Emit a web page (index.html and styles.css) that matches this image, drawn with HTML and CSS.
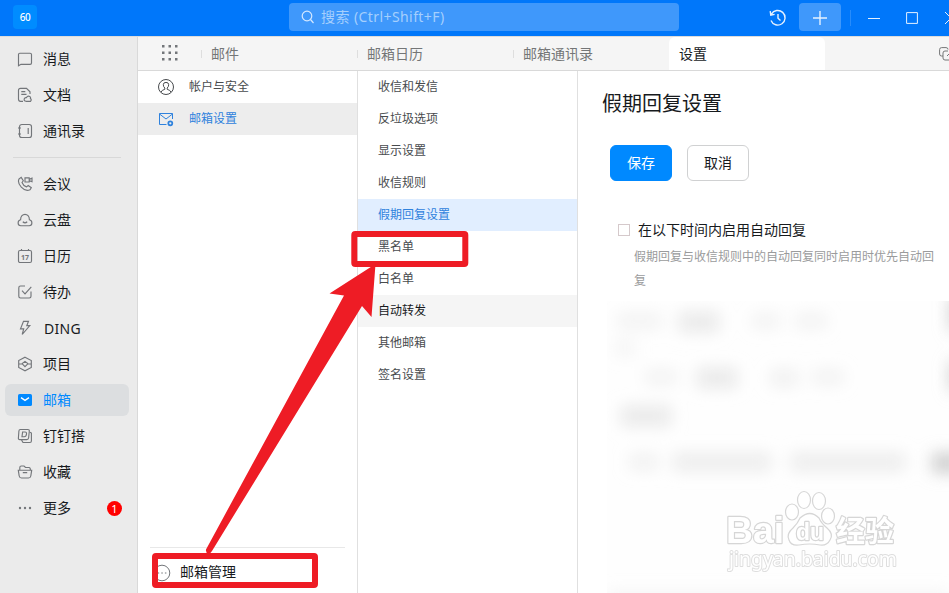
FILE: index.html
```html
<!DOCTYPE html>
<html lang="zh-CN">
<head>
<meta charset="utf-8">
<title>假期回复设置</title>
<link rel="stylesheet" href="styles.css">
</head>
<body>

<div class="topbar">
  <div class="avatar">60</div>
  <div class="search">
    <svg width="14" height="14" viewBox="0 0 14 14"><circle cx="6" cy="6" r="4.8"/><path d="M9.5 9.5L12.5 13"/></svg>
    <span>搜索 (Ctrl+Shift+F)</span>
  </div>
  <div class="tools">
    <svg class="history" width="18" height="18" viewBox="0 0 18 18"><path d="M2.4 5.2A7.3 7.3 0 1 1 2 11.5M1.2 2.2L1.8 6.1L5.6 5.4M9 5V9.3L11.5 11.5"/></svg>
    <div class="plus"><svg width="14" height="14" viewBox="0 0 14 14"><path d="M7 0V14M0 7H14"/></svg></div>
    <i class="split"></i>
    <svg class="min" width="12" height="12" viewBox="0 0 12 12"><path d="M0 6.5H12"/></svg>
    <svg class="max" width="12" height="12" viewBox="0 0 12 12"><path d="M.6 .6H11.4V11.4H.6Z"/></svg>
    <svg class="close" width="12" height="12" viewBox="0 0 12 12"><path d="M0 0L12 12M12 0L0 12"/></svg>
  </div>
</div>

<div class="app">
  <div class="sidebar">
    <div class="item"><svg width="16" height="16" viewBox="0 0 16 16"><path d="M2.8 2.2H13.1Q14.5 2.2 14.5 3.6V11.9Q14.5 13.3 13.1 13.3H4L1.5 14.8V3.6Q1.5 2.2 2.8 2.2Z"/></svg><span>消息</span></div>
    <div class="item"><svg width="16" height="16" viewBox="0 0 16 16"><path d="M6 14.3H3.5Q1.5 14.3 1.5 12.3V3.3Q1.5 1.3 3.5 1.3H9.5L13 4.8V7M4.3 4.6H8.3M4.3 7.4H9.5M9 14.3Q6.8 14 7.2 12Q7.8 10.3 9.4 10.7Q10.5 8.4 12.8 9.5Q14 10.2 13.4 11.5Q15 12.8 13.5 14.3Z"/></svg><span>文档</span></div>
    <div class="item"><svg width="16" height="16" viewBox="0 0 16 16"><rect x="2.5" y="1.5" width="12" height="13" rx="2.3"/><path d="M11.2 5V11M1 5H4M1 11H4"/></svg><span>通讯录</span></div>
    <div class="line"></div>
    <div class="item"><svg width="16" height="16" viewBox="0 0 16 16"><path d="M2 3L4.2 1.4L6.3 4.8L5 6.5Q6.3 9.8 9.5 10.9L11.2 9.5L14.3 11.7L13 13.7Q8.8 16 4.3 11.2Q.2 6.3 2 3ZM8 1.8H12.2V6H8ZM12.2 3.4L15 2.2V5.7L12.2 4.6"/></svg><span>会议</span></div>
    <div class="item"><svg width="16" height="16" viewBox="0 0 16 16"><path d="M3.8 13.7C.2 13.7 .3 8.5 3.6 7.8C3.5 .5 12.5 .5 12.4 7.8C15.7 8.5 15.8 13.7 12.2 13.7ZM5.8 9.8Q8 11.8 10.2 9.8"/></svg><span>云盘</span></div>
    <div class="item"><svg width="16" height="16" viewBox="0 0 16 16"><rect x="1.5" y="2.5" width="13" height="12" rx="1.5"/><path d="M4.5 1V3M11.5 1V3"/><text x="8" y="11.5">17</text></svg><span>日历</span></div>
    <div class="item"><svg width="16" height="16" viewBox="0 0 16 16"><path d="M8 2H3.5Q1.8 2 1.8 3.7V12.3Q1.8 14 3.5 14H12.3Q14 14 14 12.3V7.5M5 6.7L8 9.8L14.3 2.8"/></svg><span>待办</span></div>
    <div class="item"><svg width="16" height="16" viewBox="0 0 16 16"><path d="M6.5 1.3H11.5L9.8 5.6H12.8L5.2 14.5L6.7 8.8H3.5Z"/></svg><span class="ding">DING</span></div>
    <div class="item"><svg width="16" height="16" viewBox="0 0 16 16"><path d="M8 1.2L14.3 4.5V11.5L8 14.8L1.7 11.5V4.5ZM1.7 8L5 7.7L8 5.4L11 7.7L14.3 8M5 7.7L8 10.6L11 7.7"/></svg><span>项目</span></div>
    <div class="item active"><svg width="16" height="16" viewBox="0 0 16 16"><rect class="fill" x="1" y="2" width="14" height="12" rx="1.6"/><path class="flap" d="M4 5.6L8 8.4L12 5.6"/></svg><span>邮箱</span></div>
    <div class="item"><svg width="16" height="16" viewBox="0 0 16 16"><path d="M3.4 1.5H10.8Q12.5 1.5 12.3 3.2L11.6 10Q11.4 11.6 9.8 11.6H2.8Q1.2 11.6 1.4 10L1.9 3Q2 1.5 3.4 1.5ZM13 4.2L14.4 5V13Q14.4 14.5 12.9 14.5H6L4.5 12M5.6 4H8Q9.8 4 9.5 6Q9.2 8.7 7.2 8.7H5Z"/></svg><span>钉钉搭</span></div>
    <div class="item"><svg width="16" height="16" viewBox="0 0 16 16"><path d="M1.3 6.2H14.7L13.8 12Q13.5 14 11.5 14H4.5Q2.5 14 2.2 12ZM2.8 6V3.5Q2.8 2 4.3 2H7L8.5 3.5H12Q13.4 3.5 13.4 6M5.8 8.6H10.2"/></svg><span>收藏</span></div>
    <div class="item"><svg class="dots" width="16" height="16" viewBox="0 0 16 16"><circle cx="3" cy="8" r="1.2"/><circle cx="8" cy="8" r="1.2"/><circle cx="13" cy="8" r="1.2"/></svg><span>更多</span><b class="badge">1</b></div>
  </div>

  <div class="main">
    <div class="tabs">
      <svg class="grid" width="16" height="16" viewBox="0 0 16 16">
        <path d="M0 0h2.5v2.5H0zM6.500 0H9v2.500H6.500zM13 0h2.500v2.500H13zM0 6.500h2.500V9H0zM6.500 6.500H9V9H6.500zM13 6.500h2.500V9H13zM0 13h2.500v2.500H0zM6.500 13H9v2.500H6.500zM13 13h2.500v2.500H13z"/>
      </svg>
      <div class="tab">邮件</div>
      <div class="tab">邮箱日历</div>
      <div class="tab">邮箱通讯录</div>
      <div class="tab current">设置</div>
      <svg class="popout" width="14" height="14" viewBox="0 0 14 14"><path d="M4 9H2.500Q.6 9 .6 7V2.600Q.6 .6 2.600 .6H7Q9 .6 9 2.500M13 7V11Q13 13 11 13H6Q4 13 4 11V6Q4 4 6 4H9M8 9L13 4"/></svg>
    </div>

    <div class="columns">
      <div class="col nav">
        <div class="row"><svg width="16" height="16" viewBox="0 0 16 16"><circle cx="8" cy="8" r="7.5"/><path d="M3 13.2Q3.8 11 6.8 10.3V9Q5.3 7.8 5.3 5.7Q5.3 3.4 8 3.4T10.7 5.7Q10.7 7.8 9.2 9V10.3Q12.2 11 13 13.2"/></svg><span>帐户与安全</span></div>
        <div class="row selected"><svg width="16" height="16" viewBox="0 0 16 16"><path d="M8.5 13.5H1.5V2.5H14.5V8M1.5 3L8 8L14.5 3"/><circle cx="12.3" cy="12.3" r="2" stroke-width="1.7"/></svg><span>邮箱设置</span></div>
        <div class="manage"><svg width="18" height="18" viewBox="0 0 18 18"><circle cx="9" cy="9" r="7.8"/><path d="M4.7 9H6.2M8.3 9H9.8M11.9 9H13.4"/></svg><span>邮箱管理</span></div>
      </div>

      <div class="col list">
        <div class="row"><span>收信和发信</span></div>
        <div class="row"><span>反垃圾选项</span></div>
        <div class="row"><span>显示设置</span></div>
        <div class="row"><span>收信规则</span></div>
        <div class="row selected"><span>假期回复设置</span></div>
        <div class="row"><span>黑名单</span></div>
        <div class="row"><span>白名单</span></div>
        <div class="row hover"><span>自动转发</span></div>
        <div class="row"><span>其他邮箱</span></div>
        <div class="row"><span>签名设置</span></div>
      </div>

      <div class="content">
        <h1>假期回复设置</h1>
        <div class="buttons">
          <button class="save">保存</button>
          <button class="cancel">取消</button>
        </div>
        <label class="check"><i></i><span>在以下时间内启用自动回复</span></label>
        <p>假期回复与收信规则中的自动回复同时启用时优先自动回复</p>
        <!-- the form below the hint is blurred out -->
        <div class="blurred">
          <svg width="342" height="292" viewBox="0 0 342 292">
            <defs><filter id="soft" x="-10%" y="-10%" width="120%" height="120%"><feGaussianBlur stdDeviation="8"/></filter></defs>
            <g filter="url(#soft)">
              <rect x="10" y="12" width="45" height="16" opacity=".5"/>
              <rect x="72" y="11" width="40" height="20"/>
              <rect x="145" y="12" width="28" height="16" opacity=".5"/>
              <rect x="188" y="12" width="32" height="16" opacity=".5"/>
              <rect x="8" y="38" width="20" height="18" opacity=".4"/>
              <rect x="38" y="68" width="32" height="16" opacity=".5"/>
              <rect x="90" y="67" width="40" height="20"/>
              <rect x="163" y="68" width="28" height="18" opacity=".6"/>
              <rect x="205" y="68" width="32" height="16" opacity=".5"/>
              <rect x="14" y="105" width="50" height="20"/>
              <rect x="22" y="153" width="30" height="16" opacity=".6"/>
              <rect x="66" y="152" width="98" height="18" opacity=".8"/>
              <rect x="184" y="152" width="114" height="18" opacity=".8"/>
              <g class="edge">
                <rect x="325" y="152" width="30" height="20"/>
                <rect x="343" y="-5" width="12" height="35"/>
                <rect x="343" y="60" width="12" height="30"/>
              </g>
              <rect x="0" y="290" width="342" height="20" opacity=".4"/>
            </g>
          </svg>
        </div>
      </div>
    </div>
  </div>
</div>

<!-- watermark -->
<svg class="watermark" width="200" height="100" viewBox="0 0 200 100">
  <text class="brand" x="6" y="63" textLength="58" lengthAdjust="spacingAndGlyphs">Bai</text>
  <ellipse cx="72" cy="32" rx="6.5" ry="8"/>
  <ellipse cx="84" cy="20" rx="6.5" ry="8.5"/>
  <ellipse cx="99" cy="21" rx="6.5" ry="8.5"/>
  <ellipse cx="108" cy="36" rx="6.5" ry="8"/>
  <path d="M80 38Q90 29 99 38Q101 43 107 48Q114 54 110 60Q107 66 100 65Q90 63 79 65Q71 66 69 60Q66 54 73 48Q78 43 80 38Z"/>
  <text class="du" x="76" y="60" textLength="28">du</text>
  <text class="cn" x="116" y="62" textLength="58">经验</text>
  <text class="url" x="9" y="86" textLength="168" lengthAdjust="spacingAndGlyphs">jingyan.baidu.com</text>
</svg>

<!-- red marks over the page -->
<svg class="marks" width="949" height="593" viewBox="0 0 949 593">
  <rect x="354.3" y="234" width="111" height="30" rx="1"/>
  <rect x="155" y="556" width="160" height="29" rx="1"/>
  <path d="M206 549.500Q205.500 553 208.500 553.500Q210.500 553.500 212 551L362 306L371.500 317L375.500 264L329.500 293.500L344 295.500Z"/>
</svg>

</body>
</html>
```
FILE: styles.css
```css
* {
  box-sizing: border-box;
}
body {
  margin: 0;
  width: 949px;
  height: 593px;
  overflow: hidden;
  font-family: "Noto Sans", "Noto Sans CJK SC", sans-serif;
  font-size: 14px;
  color: #171a1d;
  background: #fff;
}
svg {
  flex: none;
  fill: none;
  stroke: currentColor;
}

/* blue bar on top */
.topbar {
  display: flex;
  height: 36px;
  background: #0077fa;
  color: #e5f1ff;
}
.avatar {
  flex: none;
  width: 24px;
  height: 24px;
  margin: 5px 0 0 13px;
  border-radius: 4px;
  background: #008cff;
  color: #fff;
  font-size: 10px;
  font-weight: 500;
  letter-spacing: -.5px;
  line-height: 24px;
  text-align: center;
}
.search {
  display: flex;
  align-items: center;
  gap: 6px;
  flex: none;
  width: 390px;
  height: 28px;
  margin: 3px 0 0 252px;
  padding-left: 12px;
  border-radius: 4px;
  background: #3f98fb;
  color: #a5cffd;
}
.search svg {
  color: #d4e8ff;
  stroke-width: 1.2;
}
.search span {
  padding-bottom: 2px;
  letter-spacing: .42px;
}
.tools {
  display: flex;
  align-items: center;
  flex: none;
  margin-left: 90px;
}
.history {
  stroke-width: 1.4;
}
.plus {
  display: flex;
  align-items: center;
  justify-content: center;
  width: 42px;
  height: 28px;
  margin: -2px 0 0 12px;
  border-radius: 4px;
  background: #3f98fb;
}
.plus svg {
  margin-top: 2px;
  stroke-width: 1.4;
}
.split {
  width: 1px;
  height: 16px;
  margin-left: 9px;
  background: #278cfb;
}
.min {
  margin-left: 17px;
}
.max {
  margin-left: 26px;
}
.close {
  margin-left: 27px;
}

.app {
  display: flex;
  height: 557px;
}

/* left menu */
.sidebar {
  flex: none;
  width: 138px;
  padding: 6px 0 0 5px;
  border-right: 1px solid #d9d9d9;
  border-top: 1px solid #dcdcdc;
  background: #ebebeb;
}
.item {
  display: flex;
  align-items: center;
  width: 124px;
  height: 32px;
  margin-bottom: 4px;
  padding-left: 12px;
  border-radius: 6px;
}
.item span,
.row span {
  padding-bottom: 2px;
}
.item .ding {
  padding: 0 0 0 1px;
  letter-spacing: .3px;
}
.item svg {
  margin-right: 10px;
  color: #73767a;
  stroke-width: 1.15;
}
.item text {
  fill: #73767a;
  stroke: none;
  font-size: 7px;
  font-weight: bold;
  text-anchor: middle;
}
.item.active {
  background: #dcdee0;
  color: #0089ff;
}
.item .fill {
  fill: #0089ff;
  stroke: none;
}
.item .flap {
  stroke: #fff;
  stroke-width: 1.3;
}
.item .dots,
.grid {
  fill: #73767a;
  stroke: none;
}
.line {
  width: 108px;
  height: 1px;
  margin: 10px 0 10px 8px;
  background: #d8d8d8;
}
.badge {
  width: 15px;
  height: 15px;
  margin: 0 7px 0 auto;
  border-radius: 50%;
  background: #ff0000;
  color: #fff;
  font-size: 11px;
  font-weight: normal;
  line-height: 15px;
  text-align: center;
}

/* tabs */
.main {
  flex: none;
  width: 811px;
}
.tabs {
  display: flex;
  align-items: center;
  height: 35px;
  padding-left: 25px;
  border-top: 1px solid #dcdcdc;
  border-bottom: 1px solid #d9d9d9;
  background: #f5f5f5;
  color: #747677;
  overflow: hidden;
}
.grid {
  margin: 0 23px 2px -1px;
}
.tab {
  display: flex;
  align-items: center;
  flex: none;
  width: 156px;
  height: 100%;
  padding-bottom: 2px;
}
.tab::before {
  content: "";
  width: 1px;
  height: 8px;
  margin: 3px 9px 0 0;
  background: #dedede;
}
.tab.current {
  border-radius: 6px 6px 0 0;
  background: #fff;
  color: #171a1d;
}
.tab.current::before {
  background: none;
}
.popout {
  margin-left: 114px;
}

.columns {
  display: flex;
  height: 522px;
}
.col {
  display: flex;
  flex-direction: column;
  flex: none;
  width: 220px;
  border-right: 1px solid #e0e0e0;
  font-size: 12px;
  color: #484b4e;
}
.row {
  display: flex;
  align-items: center;
  height: 32px;
  padding-left: 20px;
}
.row svg {
  margin-right: 15px;
}
.nav .selected {
  background: #ededed;
  color: #2f82dd;
}
.list .selected {
  background: #e1eeff;
  color: #2f82dd;
}
.list .hover {
  background: #f5f5f5;
  color: #171a1d;
}
.manage {
  display: flex;
  align-items: center;
  height: 46px;
  margin: auto 12px 0;
  padding: 4px 0 0 3px;
  border-top: 1px solid #e8e8e8;
  font-size: 14px;
  color: #171a1d;
}
.manage svg {
  margin-right: 9px;
  color: #73767a;
}
.manage span {
  padding-bottom: 3px;
}

/* settings form */
.content {
  flex: none;
  width: 371px;
  padding-left: 24px;
  overflow: hidden;
}
.content h1 {
  margin: 18px 0 0;
  font-size: 20px;
  font-weight: normal;
  line-height: 30px;
}
.buttons {
  display: flex;
  gap: 15px;
  margin: 26px 0 0 8px;
}
.buttons button {
  width: 62px;
  height: 36px;
  padding: 0 0 2px;
  border: 1px solid #d0d1d2;
  border-radius: 6px;
  background: #fff;
  color: #171a1d;
  font: inherit;
}
.buttons .save {
  border-color: #0089ff;
  background: #0089ff;
  color: #fff;
}
.check {
  display: flex;
  align-items: center;
  height: 22px;
  margin: 38px 0 0 16px;
}
.check i {
  width: 12px;
  height: 12px;
  margin-right: 8px;
  border: 1px solid #d5c9cb;
}
.check span {
  padding-bottom: 2px;
}
.content p {
  width: 308px;
  margin: 4px 0 0 32px;
  color: #9a9b9c;
  font-size: 12px;
  line-height: 24px;
}
.blurred {
  width: 342px;
  height: 292px;
  margin: 8px 0 0 5px;
  overflow: hidden;
  background: #fefefe;
}
.blurred rect {
  fill: #e9e9e9;
  stroke: none;
}
.blurred .edge rect {
  fill: #cfcfcf;
}

.watermark {
  position: absolute;
  left: 720px;
  top: 480px;
  fill: #fff;
  stroke: #d6d6d6;
  stroke-width: 1.2;
}
.watermark text {
  stroke-width: 2.4;
  stroke-linejoin: round;
  paint-order: stroke;
}
.watermark .brand {
  font: bold 37px "Liberation Sans", sans-serif;
}
.watermark .du {
  font: bold 23px "Liberation Sans", sans-serif;
}
.watermark .cn {
  font: bold 29px "Noto Sans CJK SC", sans-serif;
}
.watermark .url {
  font: 20px "Noto Sans", sans-serif;
  stroke: #dedede;
  stroke-width: 2;
}

.marks {
  position: absolute;
  left: 0;
  top: 0;
}
.marks rect {
  stroke: #ee1c25;
  stroke-width: 6;
}
.marks path {
  fill: #ee1c25;
  stroke: none;
}
```
